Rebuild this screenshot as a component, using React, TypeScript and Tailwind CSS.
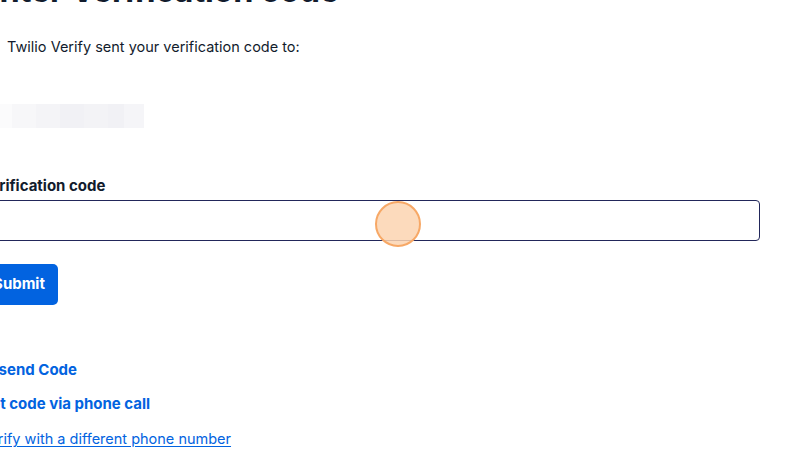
export default function App() {
  return (
    <div className="relative w-[800px] h-[450px] overflow-hidden bg-white text-[#121c2d] font-['Inter',sans-serif]">
      <div className="ml-[-20px] mt-[-29px] w-[780px]">
        <h1 className="text-[32.5px] leading-[40px] font-bold tracking-[-0.2px] whitespace-nowrap">
          Enter Verification code
        </h1>

        <p className="mt-[26px] pl-[27px] text-[14.5px] leading-[20px]">
          Twilio Verify sent your verification code to:
        </p>

        {/* blurred phone number */}
        <div className="mt-[47px] flex h-[24px] w-[164px]">
          <div className="w-[20px] bg-white" />
          <div className="w-[12px] bg-[#fbfbfc]" />
          <div className="w-[24px] bg-[#f7f7f9]" />
          <div className="w-[24px] bg-[#f4f4f7]" />
          <div className="w-[24px] bg-[#f1f1f5]" />
          <div className="w-[24px] bg-[#f3f3f6]" />
          <div className="w-[16px] bg-[#f1f1f5]" />
          <div className="w-[20px] bg-[#f5f5f8]" />
        </div>

        <label className="mt-[48px] block text-[15px] leading-[20px] font-bold">
          Verification code
        </label>

        <div className="relative mt-[4px]">
          <input
            type="text"
            className="block h-[41px] w-[780px] rounded-[4px] border-[1.5px] border-[#22275a] bg-white outline-none"
          />
          {/* click indicator */}
          <div className="absolute left-[395px] top-[1px] h-[46px] w-[46px] rounded-full border-2 border-[#f7a866] bg-[#fcd3b0]/85" />
        </div>

        <button className="mt-[23px] flex h-[41px] w-[78px] items-center justify-center rounded-[5px] bg-[#0263e0] text-[15px] font-bold text-white">
          Submit
        </button>

        <div className="mt-[55px] flex flex-col gap-[14px] text-[15px] leading-[20px] text-[#0263e0]">
          <a className="font-bold">Resend Code</a>
          <a className="font-bold">Get code via phone call</a>
          <a className="mt-[1px] text-[14.5px] underline underline-offset-2">Verify with a different phone number</a>
        </div>
      </div>
    </div>
  )
}
